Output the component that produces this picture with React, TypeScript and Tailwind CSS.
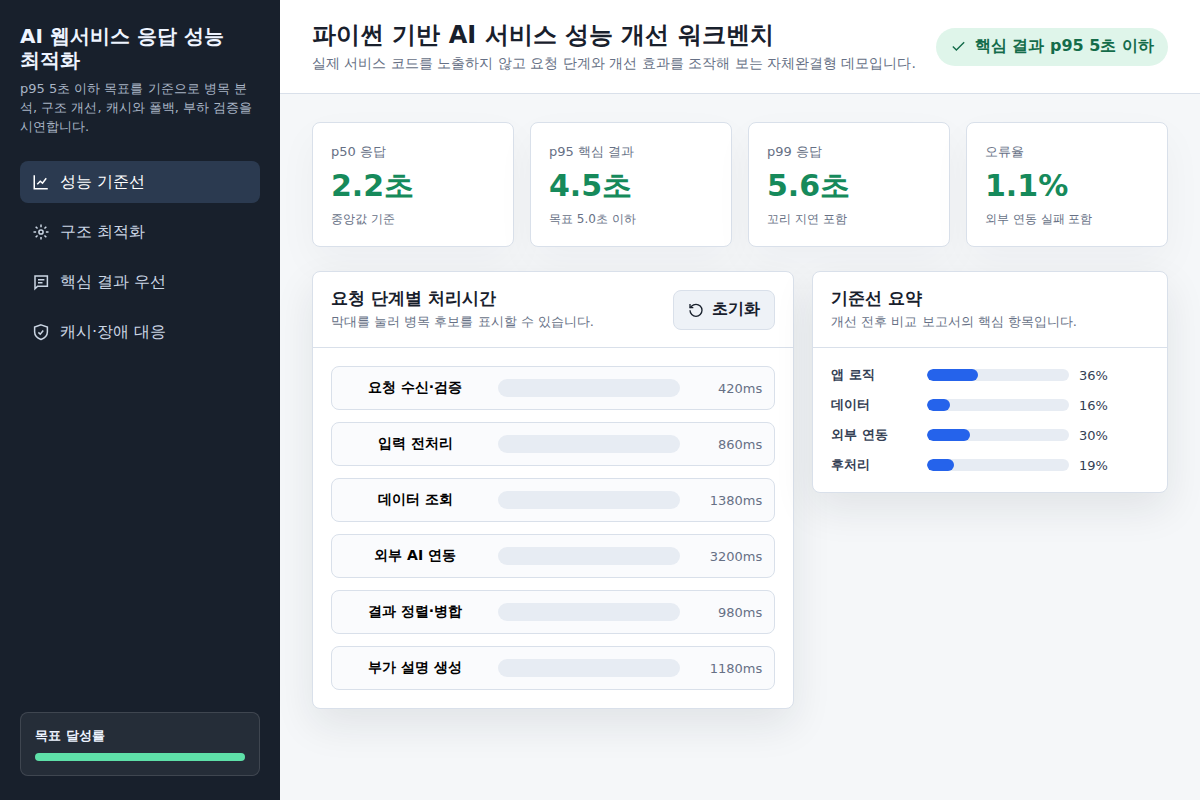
import { useState, type ReactNode } from "react";

const navItems: { label: string; icon: ReactNode }[] = [
  {
    label: "성능 기준선",
    icon: (
      <>
        <path d="M3 3v18h18" />
        <path d="M7 15l4-4 3 2.500 5-6.500" />
      </>
    ),
  },
  {
    label: "구조 최적화",
    icon: (
      <>
        <circle cx="12" cy="12" r="2.800" />
        <path d="M12 2v3.500M12 18.500V22M2 12h3.500M18.500 12H22M4.900 4.900l2.500 2.500M16.600 16.600l2.500 2.500M19.100 4.900l-2.500 2.500M7.400 16.600l-2.500 2.500" />
      </>
    ),
  },
  {
    label: "핵심 결과 우선",
    icon: (
      <>
        <path d="M4 4h16.500v13.500H7.500L4 21z" />
        <path d="M8 9h8.500M8 13h6" />
      </>
    ),
  },
  {
    label: "캐시·장애 대응",
    icon: (
      <>
        <path d="M12 2.500l8.500 3V12c0 4.500-3.500 8-8.500 10C7 20 3.500 16.500 3.500 12V5.500z" />
        <path d="M8.500 12.500l2.500 2.500 4-5" />
      </>
    ),
  },
];

const metrics = [
  { label: "p50 응답", value: "2.2초", note: "중앙값 기준" },
  { label: "p95 핵심 결과", value: "4.5초", note: "목표 5.0초 이하" },
  { label: "p99 응답", value: "5.6초", note: "꼬리 지연 포함" },
  { label: "오류율", value: "1.1%", note: "외부 연동 실패 포함" },
];

const stages = [
  { name: "요청 수신·검증", ms: 420 },
  { name: "입력 전처리", ms: 860 },
  { name: "데이터 조회", ms: 1380 },
  { name: "외부 AI 연동", ms: 3200 },
  { name: "결과 정렬·병합", ms: 980 },
  { name: "부가 설명 생성", ms: 1180 },
];

const shares = [
  { name: "앱 로직", pct: 36 },
  { name: "데이터", pct: 16 },
  { name: "외부 연동", pct: 30 },
  { name: "후처리", pct: 19 },
];

function Panel({ title, note, action, children }: { title: string; note: string; action?: ReactNode; children: ReactNode }) {
  return (
    <section className="rounded-lg border border-[#d9e0ea] bg-white shadow-[0_16px_40px_rgba(24,32,44,0.09)]">
      <div className="flex items-center justify-between gap-4 border-b border-[#d9e0ea] px-[18px] py-4">
        <div>
          <h2 className="text-[17px] leading-5 font-bold">{title}</h2>
          <p className="mt-1 text-[13px] leading-[19px] text-[#667085]">{note}</p>
        </div>
        {action}
      </div>
      <div className="p-[18px]">{children}</div>
    </section>
  );
}

export default function App() {
  const [active, setActive] = useState(0);
  const [marked, setMarked] = useState<number[]>([]);

  const toggle = (i: number) =>
    setMarked((list) => (list.includes(i) ? list.filter((n) => n !== i) : [...list, i]));

  return (
    <div className="grid min-h-screen grid-cols-[280px_minmax(0,1fr)] bg-[#f5f7f9] font-['DejaVu_Sans',sans-serif] text-base text-[#18202c]">
      <aside className="flex flex-col bg-[#18202c] px-5 py-6 text-[#eef4ff]">
        <h1 className="text-xl leading-6 font-bold break-keep">AI 웹서비스 응답 성능 최적화</h1>
        <p className="mt-[7px] text-[13px] leading-[19px] text-[#a9b5c6]">
          p95 5초 이하 목표를 기준으로 병목 분석, 구조 개선, 캐시와 폴백, 부하 검증을 시연합니다.
        </p>
        <nav className="mt-[25px] grid gap-2">
          {navItems.map((item, i) => (
            <button
              key={item.label}
              type="button"
              onClick={() => setActive(i)}
              className={`flex h-[42px] items-center gap-[10px] rounded-lg px-3 text-left leading-[normal] ${
                active === i ? "bg-[#2b3a50] text-white" : "text-[#cbd6e4]"
              }`}
            >
              <svg aria-hidden="true" viewBox="0 0 24 24" className="size-[18px]" fill="none" stroke="currentColor" strokeWidth="2">
                {item.icon}
              </svg>
              {item.label}
            </button>
          ))}
        </nav>
        <div className="mt-auto rounded-lg border border-white/12 bg-white/6 p-[14px]">
          <p className="text-[13px] leading-[18px] font-bold">목표 달성률</p>
          <div className="mt-2 h-2 overflow-hidden rounded bg-white/15">
            <div className="h-full w-full bg-[#5ee0a8]" />
          </div>
        </div>
      </aside>

      <main className="min-w-0">
        <header className="flex items-center justify-between gap-5 border-b border-[#d9e0ea] bg-white px-8 py-5">
          <div>
            <h2 className="text-2xl leading-[31px] font-bold">파이썬 기반 AI 서비스 성능 개선 워크벤치</h2>
            <p className="mt-0.5 text-sm leading-5 text-[#667085]">
              실제 서비스 코드를 노출하지 않고 요청 단계와 개선 효과를 조작해 보는 자체완결형 데모입니다.
            </p>
          </div>
          <p className="flex h-[38px] shrink-0 items-center gap-2 rounded-full bg-[#dff5ea] px-[14px] leading-[normal] font-bold text-[#146c4a]">
            <svg aria-hidden="true" viewBox="0 0 24 24" className="size-[17px]" fill="none" stroke="currentColor" strokeWidth="2">
              <path d="M20 6L9 17l-5-5" />
            </svg>
            핵심 결과 p95 5초 이하
          </p>
        </header>

        <div className="px-8 py-7">
          <div className="grid grid-cols-4 gap-4">
            {metrics.map((m) => (
              <section
                key={m.label}
                className="rounded-lg border border-[#d9e0ea] bg-white p-[18px] shadow-[0_16px_40px_rgba(24,32,44,0.04)]"
              >
                <p className="text-[13px] leading-[22px] text-[#667085]">{m.label}</p>
                <p className="mt-1 text-[30px] leading-[38px] font-bold text-[#168a5b]">{m.value}</p>
                <p className="mt-1.5 text-xs leading-[17px] text-[#667085]">{m.note}</p>
              </section>
            ))}
          </div>

          <div className="mt-6 grid grid-cols-[minmax(0,1.355fr)_minmax(0,1fr)] items-start gap-[18px]">
            <Panel
              title="요청 단계별 처리시간"
              note="막대를 눌러 병목 후보를 표시할 수 있습니다."
              action={
                <button
                  type="button"
                  onClick={() => setMarked([])}
                  className="flex h-10 shrink-0 items-center gap-2 rounded-lg border border-[#d9e0ea] bg-[#eef2f7] px-[14px] leading-[normal] font-bold"
                >
                  <svg aria-hidden="true" viewBox="0 0 24 24" className="size-4" fill="none" stroke="currentColor" strokeWidth="2">
                    <path d="M3 12.500a9 9 0 1 0 9-9 9.750 9.750 0 0 0-6.740 2.740L3 8.500" />
                    <path d="M3 3v5.500h5" />
                  </svg>
                  초기화
                </button>
              }
            >
              <div className="grid gap-3">
                {stages.map((s, i) => (
                  <button
                    key={s.name}
                    type="button"
                    aria-pressed={marked.includes(i)}
                    onClick={() => toggle(i)}
                    className="grid h-11 grid-cols-[minmax(0,1fr)_182px_70px] items-center gap-3 rounded-lg border border-[#d9e0ea] bg-[#fafbfd] px-3 leading-[normal] text-black"
                  >
                    <span className="text-[14px] leading-[normal] font-bold">{s.name}</span>
                    <span className={`h-[18px] rounded-full ${marked.includes(i) ? "bg-[#f4a340]" : "bg-[#e7ecf3]"}`} />
                    <span className="text-right text-[13px] text-[#667085]">{s.ms}ms</span>
                  </button>
                ))}
              </div>
            </Panel>

            <Panel title="기준선 요약" note="개선 전후 비교 보고서의 핵심 항목입니다.">
              <div className="grid gap-3">
                {shares.map((s) => (
                  <div key={s.name} className="grid h-[18px] grid-cols-[86px_minmax(0,1fr)_70px] items-center gap-[10px] text-[13px] leading-[normal] text-[#344054]">
                    <span className="font-bold">{s.name}</span>
                    <div className="h-3 overflow-hidden rounded-full bg-[#e7ecf3]">
                      <div className="h-full rounded-full bg-[#2563eb]" style={{ width: `${s.pct}%` }} />
                    </div>
                    <span>{s.pct}%</span>
                  </div>
                ))}
              </div>
            </Panel>
          </div>
        </div>
      </main>
    </div>
  );
}
